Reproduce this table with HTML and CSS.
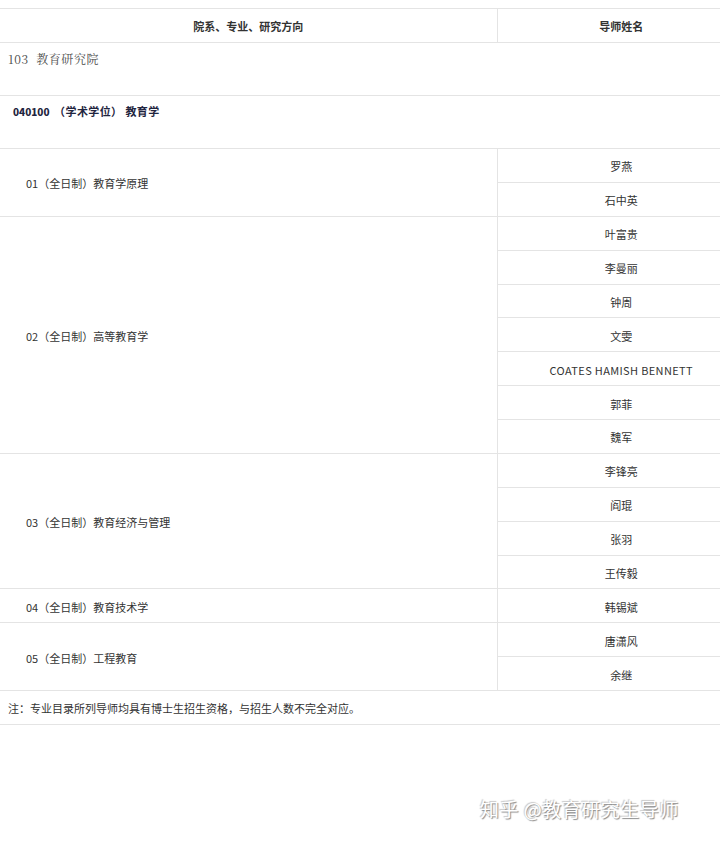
FILE: index.html
```html
<!DOCTYPE html>
<html lang="zh-CN">
<head>
<meta charset="utf-8">
<title>导师名单</title>
<link rel="stylesheet" href="styles.css">
</head>
<body>
<table class="catalog">
  <colgroup><col class="col-major"><col class="col-tutor"></colgroup>
  <thead>
    <tr class="head-row"><th>院系、专业、研究方向</th><th>导师姓名</th></tr>
  </thead>
  <tbody>
    <tr class="dept-row"><td colspan="2">103&nbsp;&nbsp;教育研究院</td></tr>
    <tr class="major-row"><td colspan="2"><b>040100</b>&nbsp;&nbsp;<span class="cn">（学术学位）&nbsp;教育学</span></td></tr>
    <tr class="r"><td class="dir" rowspan="2">01（全日制）教育学原理</td><td class="name">罗燕</td></tr>
    <tr class="r"><td class="name">石中英</td></tr>
    <tr class="r"><td class="dir" rowspan="7">02（全日制）高等教育学</td><td class="name">叶富贵</td></tr>
    <tr class="r"><td class="name">李曼丽</td></tr>
    <tr class="r"><td class="name">钟周</td></tr>
    <tr class="r"><td class="name">文雯</td></tr>
    <tr class="r"><td class="name latin">COATES HAMISH BENNETT</td></tr>
    <tr class="r"><td class="name">郭菲</td></tr>
    <tr class="r"><td class="name">魏军</td></tr>
    <tr class="r"><td class="dir" rowspan="4">03（全日制）教育经济与管理</td><td class="name">李锋亮</td></tr>
    <tr class="r"><td class="name">阎琨</td></tr>
    <tr class="r"><td class="name">张羽</td></tr>
    <tr class="r"><td class="name">王传毅</td></tr>
    <tr class="r"><td class="dir">04（全日制）教育技术学</td><td class="name">韩锡斌</td></tr>
    <tr class="r"><td class="dir" rowspan="2">05（全日制）工程教育</td><td class="name">唐潇风</td></tr>
    <tr class="r"><td class="name">余继</td></tr>
    <tr class="note-row"><td colspan="2">注：专业目录所列导师均具有博士生招生资格，与招生人数不完全对应。</td></tr>
  </tbody>
</table>
<div class="watermark">知乎 @教育研究生导师</div>
</body>
</html>
```

FILE: styles.css
```css
html, body {
  margin: 0;
  padding: 0;
  background: #ffffff;
}
body {
  width: 720px;
  height: 841px;
  position: relative;
  overflow: hidden;
  font-family: "Noto Sans CJK SC", "Noto Sans", sans-serif;
  font-size: 11px;
  color: #333333;
  padding-top: 8px;
  box-sizing: border-box;
}
.catalog {
  width: 745px;
  border-collapse: collapse;
  table-layout: fixed;
}
.col-major { width: 497px; }
.col-tutor { width: 248px; }
.catalog th,
.catalog td {
  border-top: 1px solid #e4e4e4;
  border-bottom: 1px solid #e4e4e4;
  padding: 0;
  line-height: 16px;
}
.head-row th {
  height: 33px;
  font-weight: bold;
  text-align: center;
  color: #333;
  font-size: 11px;
}
.head-row th + th,
.name {
  border-left: 1px solid #e4e4e4;
}
.dept-row td {
  height: 53px;
  vertical-align: top;
  padding: 8px 0 0 8px;
  box-sizing: border-box;
  font-family: "Noto Serif CJK SC", "Noto Sans CJK SC", serif;
  font-size: 12px;
  letter-spacing: 0.6px;
  color: #4a4a4a;
}
.major-row td {
  height: 53px;
  vertical-align: top;
  padding: 7px 0 0 13px;
  box-sizing: border-box;
  font-weight: bold;
  color: #1f2540;
  font-size: 10px;
}
.major-row .cn {
  font-size: 11px;
  letter-spacing: 0.4px;
}
.r td {
  height: 30.875px;
  padding-top: 2px;
}
.dir {
  padding-left: 26px !important;
  vertical-align: middle;
}
.name {
  text-align: center;
  vertical-align: middle;
}
.latin {
  letter-spacing: 0.35px;
}
.note-row td {
  height: 32px;
  padding-left: 8px;
  padding-top: 1px;
  vertical-align: middle;
}
.watermark {
  position: absolute;
  left: 480px;
  top: 797px;
  font-size: 19px;
  line-height: 24px;
  color: #ffffff;
  text-shadow: 1px 1px 1px #8a8a8a, -1px -1px 1px #c8c8c8;
  letter-spacing: 0.5px;
}
```
